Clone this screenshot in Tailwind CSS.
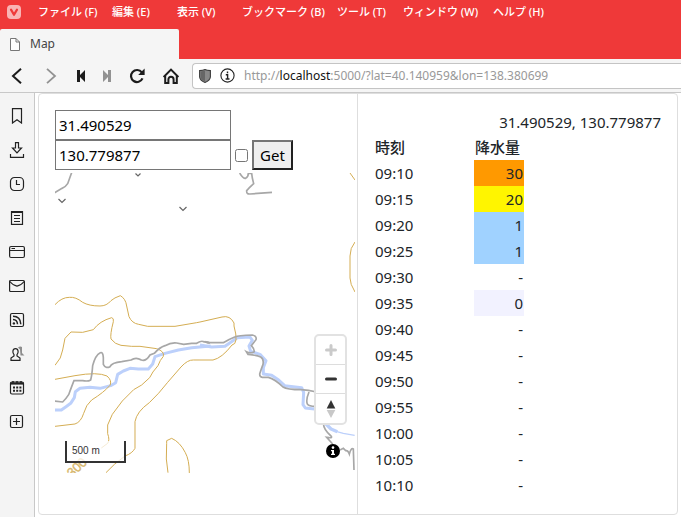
<!DOCTYPE html>
<html lang="ja">
<head>
<meta charset="utf-8">
<meta name="viewport" content="width=device-width, initial-scale=1">
<title>Map</title>
<script src="https://cdn.jsdelivr.net/npm/@tailwindcss/browser@4"></script>
</head>
<body class="min-h-screen flex flex-col overflow-x-hidden bg-white font-['Noto_Sans','Noto_Sans_CJK_JP',sans-serif] text-[#212529]">

<header class="bg-[#ef3939]">
  <div class="flex items-center h-6">
    <svg class="ml-[7px] w-[14px] h-[14px] shrink-0" viewBox="0 0 14 14" aria-hidden="true"><rect width="14" height="14" rx="4" fill="#f9b4b4"/><path d="M4 4.6 L7 9.8 L10 4.6" fill="none" stroke="#ef3939" stroke-width="2.2" stroke-linecap="round" stroke-linejoin="round"/></svg>
    <nav class="ml-[17px] grid grid-cols-[74px_65px_65px_95px_66px_90px_auto] text-[11px] leading-6 font-medium text-white whitespace-nowrap">
      <a href="#">ファイル (F)</a><a href="#">編集 (E)</a><a href="#">表示 (V)</a><a href="#">ブックマーク (B)</a><a href="#">ツール (T)</a><a href="#">ウィンドウ (W)</a><a href="#">ヘルプ (H)</a>
    </nav>
  </div>
  <div class="pt-[5px]">
    <div class="w-[179px] h-[30px] rounded-t-xs bg-[#f5f5f5] flex items-center gap-[10px] pl-[10px] text-[12px] text-[#444]">
      <svg class="w-[10px] h-[13px]" viewBox="0 0 10 13" fill="#fff" stroke="#777" aria-hidden="true"><path d="M.5 .5H6L9.5 4V12.5H.5Z"/><path d="M6 .5V4H9.5" fill="none"/></svg>
      <span>Map</span>
    </div>
  </div>
</header>

<div class="flex items-center h-[34px] bg-[#f5f5f5] border-b border-[#c8c8c8]">
  <button aria-label="戻る" class="w-[34px] h-8 flex items-center justify-center shrink-0"><svg class="w-4 h-4" viewBox="0 0 16 16" fill="none" stroke="#1c1c1c" stroke-width="2"><path d="M12 .8 L4 8 L12 15.2"/></svg></button>
  <button aria-label="進む" class="w-[34px] h-8 flex items-center justify-center shrink-0"><svg class="w-4 h-4" viewBox="0 0 16 16" fill="none" stroke="#929292" stroke-width="1.8"><path d="M4 .8 L12 8 L4 15.2"/></svg></button>
  <button aria-label="巻き戻し" class="w-[26px] h-8 flex items-center justify-center shrink-0"><svg class="w-[10px] h-3" viewBox="0 0 10 12" fill="#1c1c1c"><path d="M1 0H4V5L9 0V12L4 7V12H1Z"/></svg></button>
  <button aria-label="早送り" class="w-[26px] h-8 flex items-center justify-center shrink-0"><svg class="w-[10px] h-3" viewBox="0 0 10 12" fill="#929292"><path d="M9 0H6V5L1 0V12L6 7V12H9Z"/></svg></button>
  <button aria-label="再読み込み" class="w-[34px] h-8 flex items-center justify-center shrink-0"><svg class="w-4 h-4" viewBox="0 0 16 16" fill="none" stroke="#1c1c1c" stroke-width="2.2"><path d="M12.8 4.4 A6 6 0 1 0 13.5 10.4"/><path d="M15.6 .6V7H9.2Z" fill="#1c1c1c" stroke="none"/></svg></button>
  <button aria-label="ホーム" class="w-[34px] h-8 flex items-center justify-center shrink-0"><svg class="w-4 h-4" viewBox="0 0 16 16" fill="none" stroke="#1c1c1c" stroke-width="2"><path d="M.6 9 L8 1.6 L15.4 9"/><path d="M2.2 8V15H5.4V11.4A2.6 2.6 0 0 1 10.6 11.4V15H13.8V8"/></svg></button>
  <div class="ml-1 flex-1 min-w-0 h-[26px] flex items-center border border-r-0 border-[#c4c4c4] rounded-l-[4px] bg-white pl-[6px]">
    <svg class="w-3 h-[14px] shrink-0" viewBox="0 0 12 14" aria-hidden="true"><path d="M.6 1.6Q4 1.6 6 .6Q8 1.6 11.4 1.6V8Q11 11.5 6 13.4Q1 11.5 .6 8Z" fill="#888" stroke="#3d3d3d" stroke-width="1.1"/><path d="M6 1.6V12.4Q1.8 10.8 1.6 8V2.4Q4 2.4 6 1.6Z" fill="#666"/></svg>
    <svg class="ml-[9px] w-[15px] h-[15px] shrink-0" viewBox="0 0 15 15" fill="none" stroke="#222" stroke-width="1.1" aria-hidden="true"><circle cx="7.5" cy="7.5" r="6.6"/><path d="M7.5 3.5V5.2M5.8 6.8H7.6V11M5.6 11H9.5" stroke-width="1.4"/></svg>
    <div role="textbox" aria-label="アドレス" tabindex="0" class="ml-[9px] text-[12px] leading-6 whitespace-nowrap text-[#999]">http://<span class="text-[#111]">localhost</span>:5000/?lat=40.140959&amp;lon=138.380699</div>
  </div>
</div>

<div class="flex flex-1">
  <aside class="w-[35px] shrink-0 border-r border-[#c8c8c8] bg-[#f4f4f4] pt-[6px]">
    <button aria-label="ブックマーク" class="w-[34px] h-[34px] flex items-center justify-center"><svg class="w-4 h-4" viewBox="0 0 16 16" fill="none" stroke="#222" stroke-width="1.2"><path d="M3.5 .6H12.5V15L8 11.8L3.5 15Z"/></svg></button>
    <button aria-label="ダウンロード" class="w-[34px] h-[34px] flex items-center justify-center"><svg class="w-4 h-4" viewBox="0 0 16 16" fill="none" stroke="#222" stroke-width="1.2"><path d="M6.5 .6H9.5V6H12.5L8 10.8L3.5 6H6.5ZM1.5 12V15.3H14.5V12"/></svg></button>
    <button aria-label="履歴" class="w-[34px] h-[34px] flex items-center justify-center"><svg class="w-4 h-4" viewBox="0 0 16 16" fill="none" stroke="#222" stroke-width="1.2"><rect x="1.5" y="1.5" width="13" height="13" rx="4"/><path d="M7.5 4V8.5H11"/></svg></button>
    <button aria-label="ノート" class="w-[34px] h-[34px] flex items-center justify-center"><svg class="w-4 h-4" viewBox="0 0 16 16" fill="none" stroke="#222" stroke-width="1.2"><rect x="2.5" y="1.8" width="11" height="12.6"/><path d="M2 2H14" stroke-width="2"/><path d="M5 5.5H11M5 8.5H11M5 11.5H11"/></svg></button>
    <button aria-label="ウィンドウ" class="w-[34px] h-[34px] flex items-center justify-center"><svg class="w-4 h-4" viewBox="0 0 16 16" fill="none" stroke="#222" stroke-width="1.2"><rect x=".6" y="2.5" width="14.8" height="11" rx="1.5"/><path d="M.6 6.5H15.4M2.5 4.5H6"/></svg></button>
    <button aria-label="メール" class="w-[34px] h-[34px] flex items-center justify-center"><svg class="w-4 h-4" viewBox="0 0 16 16" fill="none" stroke="#222" stroke-width="1.2"><rect x=".6" y="2.5" width="14.8" height="11" rx="1"/><path d="M.8 3.5Q4 7.5 8 8.2Q12 7.5 15.2 3.5"/></svg></button>
    <button aria-label="フィード" class="w-[34px] h-[34px] flex items-center justify-center"><svg class="w-4 h-4" viewBox="0 0 16 16" fill="none" stroke="#222" stroke-width="1.2"><rect x="1.5" y="1.5" width="13" height="13" rx="1.5"/><path d="M4 4.2Q11.5 4.2 11.8 12.2M4 7.5Q8.3 7.7 8.5 12.2" stroke-width="1.5"/><circle cx="4.9" cy="11.4" r="1.2" fill="#222" stroke="none"/></svg></button>
    <button aria-label="連絡先" class="w-[34px] h-[34px] flex items-center justify-center"><svg class="w-4 h-4" viewBox="0 0 16 16" fill="none"><path d="M9 1.5Q11-.2 13 1V7L15.5 9.5H11.5L11 3.5Z" fill="#8d8d8d"/><path d="M6.5 2.6C9.8 2.6 9.6 7 8 8.6V10L11 12V14.4H2V12L5 10V8.6C3.4 7 3.2 2.6 6.5 2.6Z" stroke="#222" stroke-width="1.2"/></svg></button>
    <button aria-label="カレンダー" class="w-[34px] h-[34px] flex items-center justify-center"><svg class="w-4 h-4" viewBox="0 0 16 16" fill="none" stroke="#222" stroke-width="1.2"><rect x="1.5" y="2" width="13" height="12" rx="1.5"/><path d="M1.5 3.5H14.5" stroke-width="2.2"/><path d="M4 1V3M8 1V3M12 1V3" stroke-width="1.5"/><path d="M4 7.5H12.4M4 10.8H12.4" stroke-width="2" stroke-dasharray="2 1.2"/></svg></button>
    <button aria-label="パネルを追加" class="w-[34px] h-[34px] flex items-center justify-center"><svg class="w-4 h-4" viewBox="0 0 16 16" fill="none" stroke="#222" stroke-width="1.2"><rect x="1.5" y="1.5" width="12" height="12" rx="1.5"/><path d="M7.5 4V11M4 7.5H11"/></svg></button>
  </aside>

  <main class="flex-1 min-w-0 px-[3px]">
    <div class="grid grid-cols-2 border border-[#dedede] rounded-[4px] bg-white">
      <section class="p-4 border-r border-[#dedede]">
        <form class="text-[15px] text-black">
          <input type="text" aria-label="緯度" value="31.490529" class="block w-44 h-[30px] border border-[#767676] pl-[3px] bg-white">
          <div class="flex items-center">
            <input type="text" aria-label="経度" value="130.779877" class="w-44 h-[30px] border border-[#767676] pl-[3px] bg-white">
            <input type="checkbox" aria-label="自動取得" class="ml-1 w-[13px] h-[13px]">
            <button type="button" class="ml-1 h-[30px] px-[6px] leading-6 border-2 border-t-[#767676] border-l-[#767676] border-r-[#212121] border-b-[#212121] bg-[#efefef]">Get</button>
          </div>
        </form>
        <div class="relative mt-[3px] w-[300px] h-[300px]">
          <svg class="w-full h-full" viewBox="55 173 300 300" fill="none" role="img" aria-label="地図">
            <!-- rivers -->
            <g stroke="#bcd0fb" stroke-linejoin="round">
              <g transform="translate(50 340) scale(.33333)" stroke-width="9">
                <path d="M10 210H34L48 200L62 190L73 173L76 155L90 145L120 142L150 145L182 137L197 128L203 103L220 93L240 85L265 87L295 87L308 72L315 50L345 40L385 30L425 23L482 18"/>
              </g>
              <g transform="translate(200 290) scale(.33333)" stroke-width="9">
                <path d="M0 165L35 171L75 169L90 158L112 143L150 141L157 151L147 168L152 184L180 193L198 212L190 233L190 252L215 256L236 270L254 287L305 293L311 307L309 344L316 354L350 358"/>
                <path d="M378 402L393 417L412 425" stroke-width="10"/><path d="M408 424L430 430L464 436" stroke-width="4"/>
              </g>
            </g>
            <!-- contour lines -->
            <g stroke="#d4ad52">
              <g transform="translate(50 210) scale(.33333)" stroke-width="3">
                <path d="M15 284Q35 262 58 262Q77 260 98 277Q117 288 150 288Q170 288 183 272Q193 263 211 257Q227 266 230 288L237 320Q246 340 266 343L293 349H375L440 338L450 336"/>
                <path d="M15 466Q35 445 38 420L45 385L63 366L98 367L130 359Q149 333 185 323Q192 324 190 335Q180 374 183 387Q195 403 213 406L245 409H270L320 416Q344 424 340 439Q330 450 324 467Q306 487 299 503Q275 529 251 539Q215 570 187 613L173 645V671Q180 690 173 700L154 714"/>
                <path d="M15 508L75 497Q143 485 171 498Q187 512 180 526Q162 547 125 570Q108 584 101 610Q93 636 75 642L15 649"/>
                <path d="M450 450H430Q413 449 393 471L353 517Q326 552 298 578Q260 605 255 635V715Q247 730 225 738Q191 762 168 788"/>
                <path d="M354 788Q346 750 350 700V692L365 685Q390 696 406 728Q418 750 418 789"/>
              </g>
              <path d="M200 322L222 317Q230 315 234 323V326Q239 344 232 345Q222 358 213 360H200M350 173L355 180M355 242Q350 248 350 256V278Q350 284 355 292"/>
            </g>
            <!-- roads -->
            <g stroke="#a7a7a7">
              <g transform="translate(36 95) scale(.33333)" stroke-width="5">
                <path d="M108 230L95 266Q88 277 78 280L54 294M611 234Q621 251 629 250Q637 246 637 235H647L649 249L653 266Q638 280 632 287Q631 298 642 297L708 292"/>
              </g>
              <g transform="translate(50 340) scale(.33333)" stroke-width="5">
                <path d="M12 183L38 186Q47 178 56 164Q66 137 72 122H98Q114 125 122 120Q126 105 128 77Q136 45 151 38Q159 35 160 53V73Q167 87 180 80Q185 68 215 65L243 60Q258 50 274 60Q288 65 300 45L313 40Q329 22 345 17Q363 7 380 9L401 13L425 10L440 10Q455 1 460 5L478 8"/>
              </g>
              <g transform="translate(200 290) scale(.33333)" stroke-width="5">
                <path d="M20 157L25 158H70Q89 147 104 141Q114 136 157 135Q171 138 168 149L154 167Q165 179 162 186Q151 191 139 185L144 193Q168 195 182 201Q192 207 189 223Q184 236 179 252Q179 261 187 262H205Q225 267 249 291Q261 299 304 299Q324 300 350 306M327 306Q317 330 322 342Q328 350 350 349M370 400Q371 420 393 438Q398 444 388 443L380 442L398 462M420 480L430 475L437 482Q444 480 448 492Q453 472 460 477L462 540M20 157L28 158"/>
              </g>
              <path d="M205 341.500Q207 343 210 342.800" stroke-width="1.667"/>
            </g>
            <path d="M135.500 173.500L138 176L140.500 173.500M58.500 199L62 202.500L65.500 199M179.500 207L183 210.500L186.500 207" stroke="#666" stroke-width="1.200"/>
            <text x="0" y="0" transform="translate(72 478) rotate(-43)" fill="#d8b76b" font-size="13" font-family="Liberation Sans, sans-serif" stroke="#d8b76b" stroke-width=".400">300</text>
          </svg>
          <div class="absolute left-[10px] bottom-[10px] w-[61px] h-[22px] border-2 border-t-0 border-[#333] bg-white/75 pl-[5px] font-['Liberation_Sans',sans-serif] text-[10px] leading-5 text-[#333]">500 m</div>
          <div class="absolute right-[8px] bottom-[48px] w-[33px] border-2 border-[#e2e2e2] rounded-[5px] bg-white divide-y divide-[#dddddd]">
            <button aria-label="拡大" class="w-full h-[29px] flex items-center justify-center"><svg class="w-3 h-3" viewBox="0 0 12 12" stroke="#cacaca" stroke-width="3" stroke-linecap="round"><path d="M6 1.500V10.500M1.500 6H10.500"/></svg></button>
            <button aria-label="縮小" class="w-full h-[29px] flex items-center justify-center"><svg class="w-3 h-3" viewBox="0 0 12 12" stroke="#333" stroke-width="3" stroke-linecap="round"><path d="M1.500 6H10.500"/></svg></button>
            <button aria-label="方位をリセット" class="w-full h-[29px] flex items-center justify-center"><svg class="w-[10px] h-[18px]" viewBox="0 0 10 18"><path d="M5 0L9.300 8.500H.700Z" fill="#333"/><path d="M5 18L9.300 10H.700Z" fill="#c8c8c8"/></svg></button>
          </div>
          <button aria-label="著作権情報" class="absolute right-[15px] bottom-[15px] w-[14px] h-[14px]"><svg class="w-full h-full" viewBox="0 0 14 14"><circle cx="7" cy="7" r="7"/><circle cx="7" cy="3.600" r="1.300" fill="#fff"/><path d="M5 6H8V9.800H9V11H5V9.800H6V7.200H5Z" fill="#fff"/></svg></button>
        </div>
      </section>

      <section class="p-4 text-[15px]">
        <p class="text-right leading-6">31.490529, 130.779877</p>
        <table class="leading-6 border-collapse">
          <thead><tr class="text-left"><th scope="col" class="w-[100px] p-px font-medium">時刻</th><th scope="col" class="w-[50px] p-px font-medium whitespace-nowrap">降水量</th></tr></thead>
          <tbody>
            <tr><td class="p-px">09:10</td><td class="p-px text-right bg-[#ff9900]">30</td></tr>
            <tr><td class="p-px">09:15</td><td class="p-px text-right bg-[#fff500]">20</td></tr>
            <tr><td class="p-px">09:20</td><td class="p-px text-right bg-[#a0d2ff]">1</td></tr>
            <tr><td class="p-px">09:25</td><td class="p-px text-right bg-[#a0d2ff]">1</td></tr>
            <tr><td class="p-px">09:30</td><td class="p-px text-right">-</td></tr>
            <tr><td class="p-px">09:35</td><td class="p-px text-right bg-[#f2f2ff]">0</td></tr>
            <tr><td class="p-px">09:40</td><td class="p-px text-right">-</td></tr>
            <tr><td class="p-px">09:45</td><td class="p-px text-right">-</td></tr>
            <tr><td class="p-px">09:50</td><td class="p-px text-right">-</td></tr>
            <tr><td class="p-px">09:55</td><td class="p-px text-right">-</td></tr>
            <tr><td class="p-px">10:00</td><td class="p-px text-right">-</td></tr>
            <tr><td class="p-px">10:05</td><td class="p-px text-right">-</td></tr>
            <tr><td class="p-px">10:10</td><td class="p-px text-right">-</td></tr>
          </tbody>
        </table>
      </section>
    </div>
  </main>
</div>
</body>
</html>
